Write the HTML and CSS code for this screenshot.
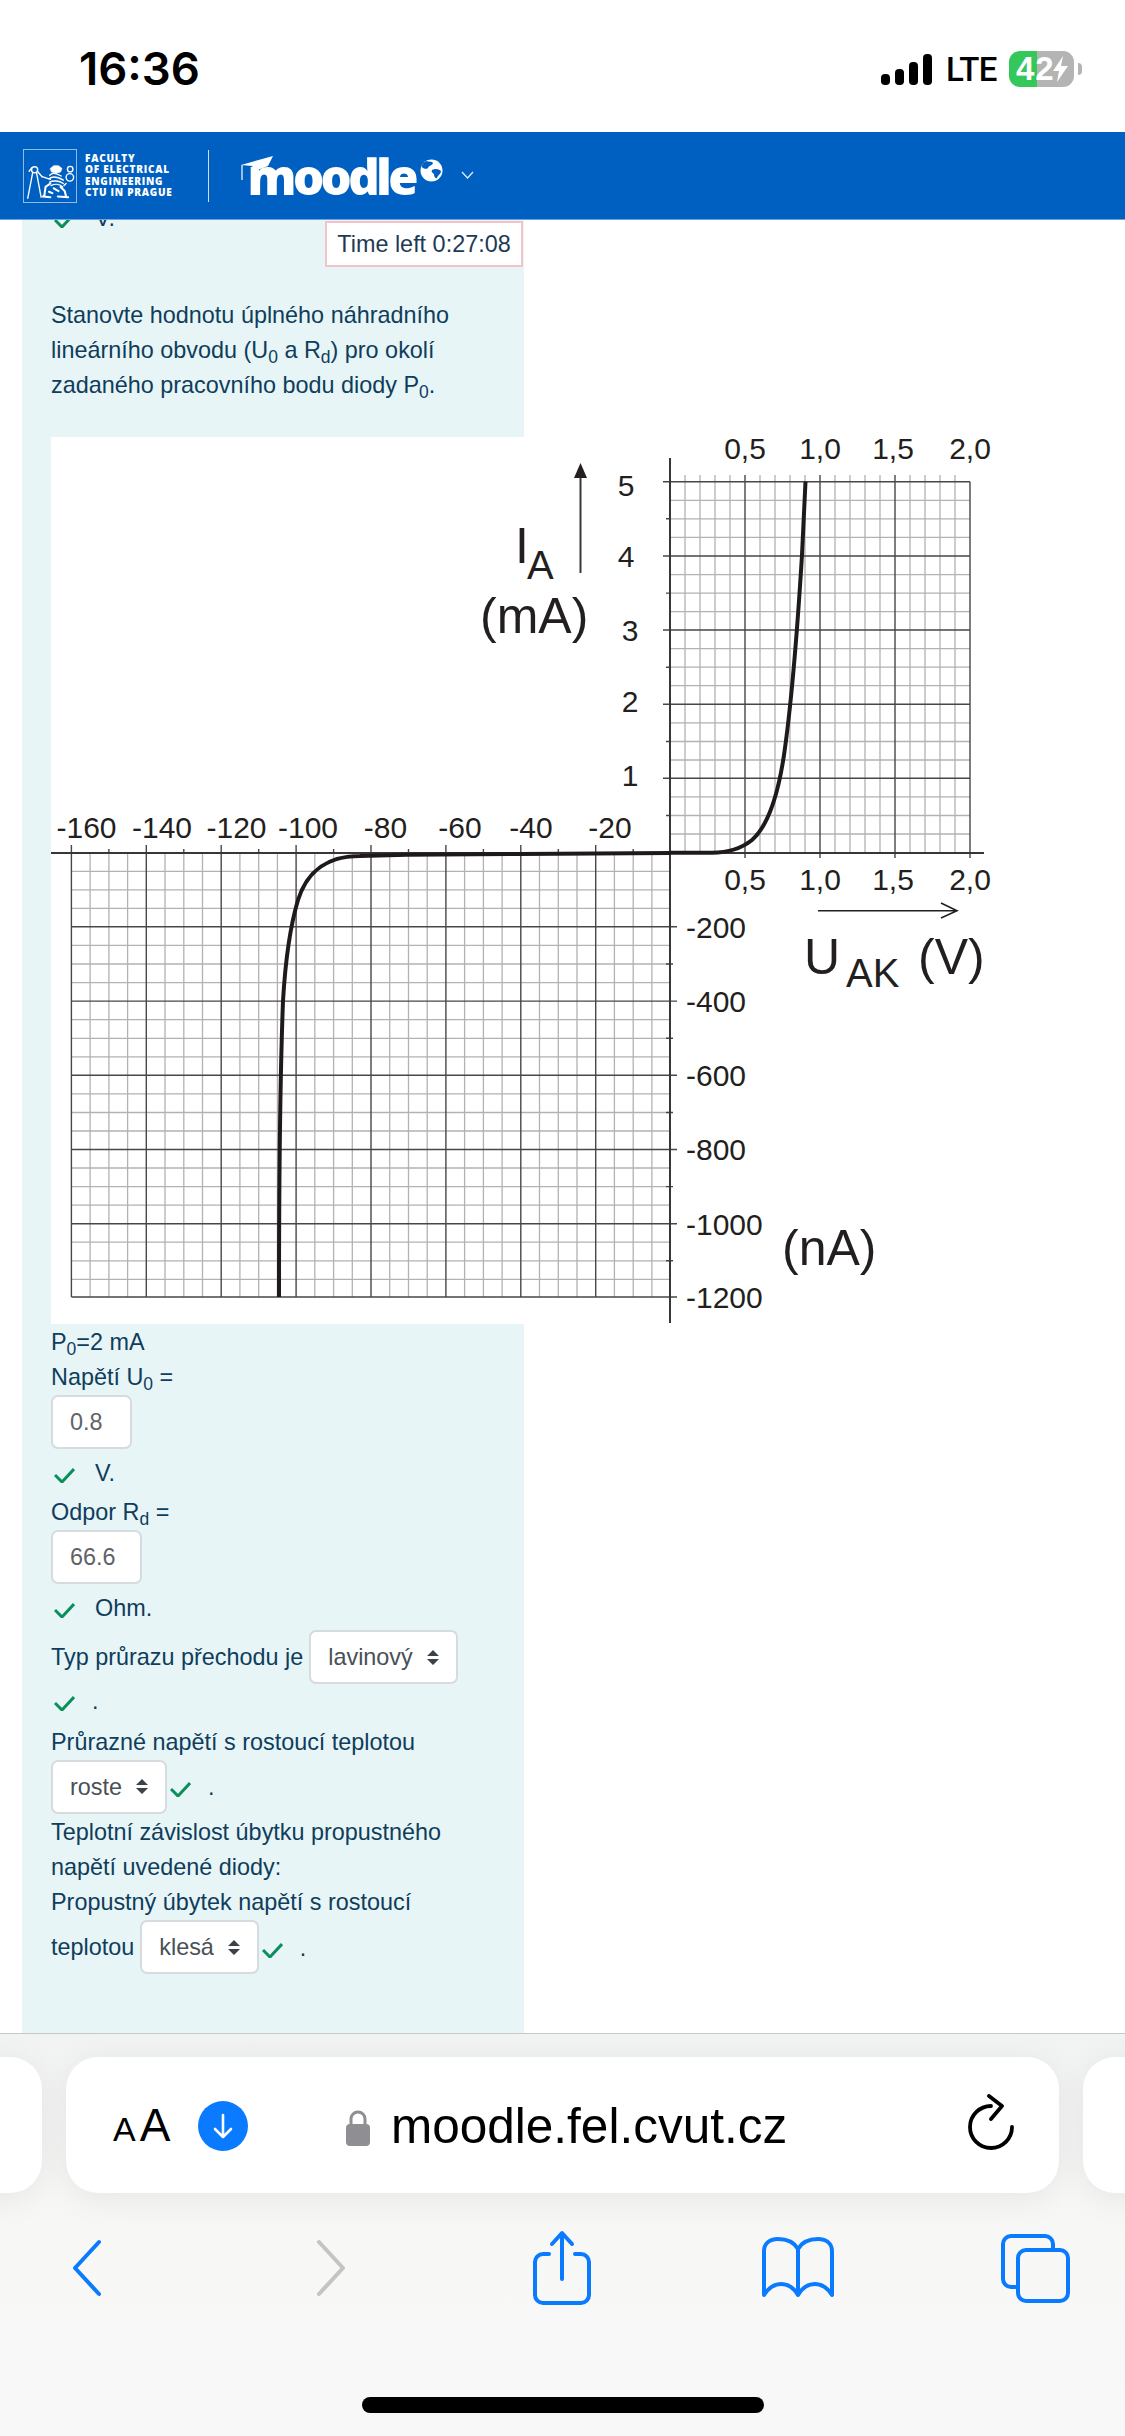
FILE: index.html
```html
<!DOCTYPE html>
<html lang="en">
<head>
    <meta charset="UTF-8">
    <title>moodle.fel.cvut.cz</title>
    <link rel="stylesheet" href="styles.css">
</head>
<body>
<div class="phone">
    <div class="status-bar">
        <span class="clock">16:36</span>
        <div class="status-icons">
            <div class="signal"><i class="b1"></i><i class="b2"></i><i class="b3"></i><i class="b4"></i></div>
            <span class="lte">LTE</span>
            <div class="battery">
                <div class="battery-body">
                    <span class="battery-4">4</span><span class="battery-2">2</span>
                    <svg class="bolt" width="15" height="26" viewBox="0 0 15 26"><path d="M10 0 L0 15 H6 L4 26 L15 10 H8 Z" fill="#fff"/></svg>
                </div>
                <div class="battery-nub"></div>
            </div>
        </div>
    </div>

    <header class="site-header">
        <div class="ctu-mark">
            <svg width="52" height="52" viewBox="13 15 152 150" fill="none" stroke="#fff" stroke-width="4" stroke-linecap="round">
                <!-- compass -->
                <circle cx="44" cy="72" r="9"/>
                <path d="M38 82 L24 155 M50 82 L63 152 M36 66 L28 76 M52 76 L66 92"/>
                <!-- lion -->
                <path d="M90 68 L100 60 L114 60 L124 68 L120 78 L106 82 L94 78 Z" fill="#fff" stroke-width="2"/>
                <path d="M66 92 L90 100 M88 88 C96 78 112 84 122 90 M86 98 C96 90 114 94 128 102 M88 108 C98 102 116 104 128 112 M92 118 C104 112 118 114 126 122"/>
                <path d="M90 112 L76 122 L72 150 M68 150 L90 152 M120 122 L132 134 L136 150 M112 150 L142 152 M100 126 L114 134 M86 136 L96 140" stroke-width="6"/>
                <!-- tail -->
                <circle cx="148" cy="70" r="8"/>
                <circle cx="147" cy="94" r="11"/>
                <path d="M136 112 L130 118"/>
            </svg>
        </div>
        <div class="ctu-name">
            <span>FACULTY</span>
            <span>OF ELECTRICAL</span>
            <span>ENGINEERING</span>
            <span>CTU IN PRAGUE</span>
        </div>
        <div class="header-divider"></div>
        <div class="moodle-logo">
            <svg class="moodle-hat" width="36" height="30" viewBox="0 0 36 30">
                <path d="M0 12 L32 3 L27 13 L14 18 L11 13 Z" fill="#fff"/>
                <path d="M1 12 V27" stroke="#fff" stroke-width="1.2"/>
            </svg>
            <span class="moodle-word">moodle</span>
            <svg class="moodle-globe" width="23" height="23" viewBox="0 0 23 23">
                <circle cx="11.5" cy="11.5" r="11" fill="#fff"/>
                <path d="M6 2 C9 3 12 2 13 4 C12 7 9 6 8 9 C6 11 3 9 1.5 8 C2 5 4 3 6 2 Z" fill="#0060c2"/>
                <path d="M12 11 C15 9 19 10 21 12 C21 15 18 16 17 19 C15 20 14 17 14 15 C12 14 11 12 12 11 Z" fill="#0060c2"/>
            </svg>
        </div>
        <svg class="header-chevron" width="13" height="8" viewBox="0 0 13 8"><path d="M1 1 L6.5 7 L12 1" fill="none" stroke="#dbe8f6" stroke-width="1.4"/></svg>
    </header>

    <main class="content">
        <div class="time-left">Time left 0:27:08</div>
        <section class="question">
            <div class="line first-line"><svg class="check" width="21" height="16" viewBox="0 0 21 16"><path d="M1 8 L8 15 L20 2"/></svg><span class="unit">V.</span></div>

            <p class="prompt">Stanovte hodnotu úplného náhradního<br>lineárního obvodu (U<sub>0</sub> a R<sub>d</sub>) pro okolí<br>zadaného pracovního bodu diody P<sub>0</sub>.</p>

            <svg class="chart" width="950" height="899" viewBox="51 425 950 899">
                <rect x="51" y="437" width="950" height="887" fill="#fff"/>
                <!-- minor grid -->
                <path class="grid-minor" d="M685 475V853M700 475V853M715 475V853M730 475V853M760 475V853M775 475V853M790 475V853M805 475V853M835 475V853M850 475V853M865 475V853M880 475V853M910 475V853M925 475V853M940 475V853M955 475V853
                    M670 500.3H970M670 518.8H970M670 537.4H970M670 574.6H970M670 593.1H970M670 611.7H970M670 648.6H970M670 667.2H970M670 685.7H970M670 722.9H970M670 741.5H970M670 760H970M670 796.9H970M670 815.5H970M670 834H970
                    M90.1 853V1297M108.9 853V1297M127.6 853V1297M165 853V1297M183.8 853V1297M202.5 853V1297M239.9 853V1297M258.7 853V1297M277.4 853V1297M314.8 853V1297M333.6 853V1297M352.3 853V1297M389.7 853V1297M408.5 853V1297M427.2 853V1297M464.6 853V1297M483.4 853V1297M502.1 853V1297M539.5 853V1297M558.3 853V1297M577 853V1297M614.4 853V1297M633.2 853V1297M651.9 853V1297
                    M71.4 871.4H670M71.4 889.9H670M71.4 908.4H670M71.4 945.4H670M71.4 964H670M71.4 982.6H670M71.4 1019.7H670M71.4 1038.3H670M71.4 1056.8H670M71.4 1093.9H670M71.4 1112.5H670M71.4 1131H670M71.4 1168H670M71.4 1186.6H670M71.4 1205.1H670M71.4 1242.2H670M71.4 1260.8H670M71.4 1279.3H670"/>
                <!-- major grid -->
                <path class="grid-major" d="M745 475V858M820 475V858M895 475V858M970 481.7V858
                    M663 481.7H970M663 556H970M663 630H970M663 704.3H970M663 778.3H970
                    M71.4 845V1297M146.3 845V1297M221.2 845V1297M296.1 845V1297M371 845V1297M445.9 845V1297M520.8 845V1297M595.7 845V1297
                    M71.4 926.8H677M71.4 1001.1H677M71.4 1075.3H677M71.4 1149.5H677M71.4 1223.7H677M71.4 1297H677"/>
                <!-- half ticks on the axes -->
                <path class="grid-major" d="M666 518.8H670M666 593.1H670M666 667.2H670M666 741.5H670M666 815.5H670
                    M666 964H673M666 1038.3H673M666 1112.5H673M666 1186.6H673M666 1260.8H673
                    M108.9 849V853M183.8 849V853M258.7 849V853M333.6 849V853M408.5 849V853M483.4 849V853M558.3 849V853M633.2 849V853"/>
                <path class="axis" d="M51 853H984M670 458V1323"/>

                <path class="curve" d="M670 852.7 H712 C730 852.7 742 848 752 840 C768 826 778 795 784 755 C792 700 798 620 802 555 L805.5 481.7"/>
                <path class="curve" d="M279 1297 C279 1180 280 1080 283 1001 C286 950 292 920 298 900 C305 878 320 856 360 856 L407 854.7 L520 854 L670 853"/>

                <path class="axis" d="M580.5 573V470"/>
                <path class="arrow-head" d="M574 478 L580.5 463 L587 478 Z"/>
                <path class="axis-thin" d="M818 910.7H956M941 903 L957 910.7 L941 918"/>

                <g class="tick-label">
                    <text x="745" y="459">0,5</text>
                    <text x="820" y="459">1,0</text>
                    <text x="893" y="459">1,5</text>
                    <text x="970" y="459">2,0</text>
                    <text x="745" y="890">0,5</text>
                    <text x="820" y="890">1,0</text>
                    <text x="893" y="890">1,5</text>
                    <text x="970" y="890">2,0</text>
                    <text x="626" y="496">5</text>
                    <text x="626" y="567">4</text>
                    <text x="630" y="641">3</text>
                    <text x="630" y="712">2</text>
                    <text x="630" y="786">1</text>
                    <text x="86.5" y="837.5">-160</text>
                    <text x="162" y="837.5">-140</text>
                    <text x="236.5" y="837.5">-120</text>
                    <text x="308" y="837.5">-100</text>
                    <text x="385.5" y="837.5">-80</text>
                    <text x="460" y="837.5">-60</text>
                    <text x="531" y="837.5">-40</text>
                    <text x="610" y="837.5">-20</text>
                </g>
                <g class="tick-label tick-left">
                    <text x="686" y="937.5">-200</text>
                    <text x="686" y="1011.5">-400</text>
                    <text x="686" y="1086">-600</text>
                    <text x="686" y="1160">-800</text>
                    <text x="686" y="1235">-1000</text>
                    <text x="686" y="1308">-1200</text>
                </g>
                <text class="axis-label" x="515" y="563">I</text>
                <text class="axis-sub" x="527" y="579">A</text>
                <text class="axis-label" x="480" y="633">(mA)</text>
                <text class="axis-label" x="804" y="974">U</text>
                <text class="axis-sub" x="846" y="987">AK</text>
                <text class="axis-label" x="918" y="974">(V)</text>
                <text class="axis-label" x="782" y="1265">(nA)</text>
            </svg>

            <div class="line after-chart">P<sub>0</sub>=2 mA</div>
            <div class="line">Napětí U<sub>0</sub> =</div>
            <div class="answer answer-u">0.8</div>
            <div class="line after-answer"><svg class="check" width="21" height="16" viewBox="0 0 21 16"><path d="M1 8 L8 15 L20 2"/></svg><span class="unit">V.</span></div>
            <div class="line gap-top">Odpor R<sub>d</sub> =</div>
            <div class="answer answer-r">66.6</div>
            <div class="line after-answer"><svg class="check" width="21" height="16" viewBox="0 0 21 16"><path d="M1 8 L8 15 L20 2"/></svg><span class="unit">Ohm.</span></div>

            <div class="select-row gap-top">
                <span>Typ průrazu přechodu je</span>
                <div class="select">
                    <span>lavinový</span>
                    <svg width="12" height="15" viewBox="0 0 12 15"><path d="M6 0 L12 6 H0 Z M0 9 H12 L6 15 Z"/></svg>
                </div>
            </div>
            <div class="line"><svg class="check" width="21" height="16" viewBox="0 0 21 16"><path d="M1 8 L8 15 L20 2"/></svg><span class="dot">.</span></div>
            <div class="line gap-top-wide">Průrazné napětí s rostoucí teplotou</div>
            <div class="select-row">
                <div class="select">
                    <span>roste</span>
                    <svg width="12" height="15" viewBox="0 0 12 15"><path d="M6 0 L12 6 H0 Z M0 9 H12 L6 15 Z"/></svg>
                </div>
                <span class="mark"><svg class="check" width="21" height="16" viewBox="0 0 21 16"><path d="M1 8 L8 15 L20 2"/></svg><span class="dot">.</span></span>
            </div>
            <div class="line after-select">Teplotní závislost úbytku propustného</div>
            <div class="line">napětí uvedené diody:</div>
            <div class="line">Propustný úbytek napětí s rostoucí</div>
            <div class="select-row">
                <span>teplotou</span>
                <div class="select">
                    <span>klesá</span>
                    <svg width="12" height="15" viewBox="0 0 12 15"><path d="M6 0 L12 6 H0 Z M0 9 H12 L6 15 Z"/></svg>
                </div>
                <span class="mark"><svg class="check" width="21" height="16" viewBox="0 0 21 16"><path d="M1 8 L8 15 L20 2"/></svg><span class="dot">.</span></span>
            </div>
        </section>
    </main>

    <footer class="toolbar">
        <div class="address-row">
            <div class="side-pill side-left"></div>
            <div class="address-pill">
                <span class="aa"><small>A</small>A</span>
                <span class="download">
                    <svg width="26" height="30" viewBox="0 0 26 30" fill="none" stroke="#fff" stroke-width="2.6" stroke-linecap="round" stroke-linejoin="round"><path d="M13 4 V26 M5 18 L13 26 L21 18"/></svg>
                </span>
                <svg class="lock" width="26" height="37" viewBox="0 0 26 37">
                    <path d="M6 17 V10 a7 7 0 0 1 14 0 V17" fill="none" stroke="#8e8e93" stroke-width="3"/>
                    <rect x="1" y="15" width="24" height="22" rx="4" fill="#8e8e93"/>
                </svg>
                <span class="url">moodle.fel.cvut.cz</span>
                <svg class="reload" width="48" height="58" viewBox="0 0 48 58" fill="none" stroke="#000" stroke-width="3.8" stroke-linecap="round" stroke-linejoin="round">
                    <path d="M24 12 A21 21 0 1 0 45 33"/>
                    <path d="M22 2 L35 12 L24 25"/>
                </svg>
            </div>
            <div class="side-pill side-right"></div>
        </div>
        <nav class="nav-row">
            <svg class="nav-back" width="30" height="58" viewBox="0 0 30 58"><path d="M27 3 L3 29 L27 55"/></svg>
            <svg class="nav-forward" width="30" height="58" viewBox="0 0 30 58"><path d="M3 3 L27 29 L3 55"/></svg>
            <svg class="nav-share" width="60" height="76" viewBox="0 0 60 76">
                <path d="M17 24 H11 a8 8 0 0 0 -8 8 V65 a8 8 0 0 0 8 8 H49 a8 8 0 0 0 8 -8 V32 a8 8 0 0 0 -8 -8 H43"/>
                <path d="M30 49 V4 M20 14 L30 3 L40 14"/>
            </svg>
            <svg class="nav-book" width="74" height="62" viewBox="0 0 74 62">
                <path d="M37 12 C33 5 26 2 17 2 C8 2 3 7 3 14 V58 C8 50 14 47 20 47 C27 47 33 51 37 58 C41 51 47 47 54 47 C60 47 66 50 71 58 V14 C71 7 66 2 57 2 C48 2 41 5 37 12 Z M37 12 V58"/>
            </svg>
            <svg class="nav-tabs" width="70" height="70" viewBox="0 0 70 70">
                <path d="M17 54 H11 a8 8 0 0 1 -8 -8 V11 a8 8 0 0 1 8 -8 H45 a8 8 0 0 1 8 8 V17"/>
                <rect x="18" y="17" width="50" height="51" rx="8"/>
            </svg>
        </nav>
        <div class="home-bar"></div>
    </footer>
</div>
</body>
</html>
```

FILE: styles.css
```css
* {
    box-sizing: border-box;
}

html, body {
    margin: 0;
    background: #fff;
}

.phone {
    width: 1125px;
    height: 2436px;
    display: flex;
    flex-direction: column;
    overflow: hidden;
    font-family: "Liberation Sans", Arial, sans-serif;
    color: #0f3d5b;
}

/* Status bar */
.status-bar {
    height: 132px;
    flex: none;
    display: flex;
    justify-content: space-between;
    padding: 45px 43px 0 79px;
}

.clock {
    font-family: Inter, sans-serif;
    font-weight: 600;
    font-size: 45.5px;
    line-height: 48px;
    color: #000;
}

.status-icons {
    display: flex;
    align-items: flex-start;
}

.signal {
    display: flex;
    align-items: flex-end;
    gap: 5.5px;
    height: 32px;
    margin: 8px 14px 0 0;
}

.signal i {
    display: block;
    width: 8.5px;
    background: #000;
    border-radius: 4px;
}

.signal .b1 { height: 11px; }
.signal .b2 { height: 16px; }
.signal .b3 { height: 23px; }
.signal .b4 { height: 31px; }

.lte {
    font-family: Roboto, sans-serif;
    font-weight: 500;
    font-size: 33px;
    line-height: 36px;
    letter-spacing: -0.5px;
    margin: 7px 12px 0 0;
    color: #000;
}

.battery {
    display: flex;
    align-items: center;
    margin-top: 6px;
}

.battery-body {
    width: 65px;
    height: 36px;
    border-radius: 11px;
    background: linear-gradient(to right, #34c759 0, #34c759 28px, #b4b4b4 28px);
    display: flex;
    align-items: center;
    padding-left: 7px;
    color: #fff;
    font-weight: bold;
    font-size: 33px;
}

.battery-2 {
    margin-left: 1px;
}

.bolt {
    margin-left: -1px;
}

.battery-nub {
    width: 4px;
    height: 12px;
    margin-left: 4px;
    background: #b4b4b4;
    border-radius: 0 6px 6px 0;
}

/* Site header */
.site-header {
    height: 88px;
    flex: none;
    display: flex;
    align-items: center;
    padding-left: 23px;
    background: #0060c2;
    border-bottom: 1.5px solid #6ca3dd;
}

.ctu-mark {
    width: 54px;
    height: 54px;
    border: 1px solid #8fbbe8;
    display: flex;
    align-items: center;
    justify-content: center;
}

.ctu-name {
    display: flex;
    flex-direction: column;
    margin-left: 8px;
    font-family: "Open Sans", sans-serif;
    font-weight: 800;
    font-size: 10px;
    line-height: 11.1px;
    letter-spacing: 0.75px;
    color: #fff;
}

.header-divider {
    width: 1px;
    height: 52px;
    margin-left: 35px;
    background: #cfe0f3;
}

.moodle-logo {
    position: relative;
    display: flex;
    align-items: center;
    margin-left: 39px;
    height: 60px;
}

.moodle-word {
    font-family: "Open Sans", sans-serif;
    font-weight: 800;
    font-size: 49px;
    line-height: 60px;
    letter-spacing: -3.6px;
    color: #fff;
}

.moodle-hat {
    position: absolute;
    left: -7px;
    top: 7px;
}

.moodle-globe {
    margin: -10px 0 0 5px;
}

.header-chevron {
    margin: 0 0 2px 18px;
}

/* Scrolled page content */
.content {
    position: relative;
    flex: 1;
    overflow: hidden;
}

.time-left {
    position: absolute;
    left: 325px;
    top: 1px;
    width: 198px;
    height: 46px;
    background: #fff;
    border: 2px solid #f5c2c9;
    color: #1d3a55;
    font-size: 23.4px;
    line-height: 42px;
    text-align: center;
}

.question {
    width: 502px;
    margin: -19.3px 0 0 22px;
    padding: 0 0 200px 29px;
    background: #e7f5f7;
    font-size: 23.4px;
    line-height: 35px;
}

.line {
    height: 35px;
    white-space: nowrap;
}

.first-line {
    margin-bottom: 61.8px;
}

.prompt {
    margin: 0 0 22.5px;
    white-space: nowrap;
}

sub {
    font-size: 17.5px;
    line-height: 0;
    vertical-align: -5px;
}

.check {
    margin-left: 3px;
    vertical-align: -2px;
    fill: none;
    stroke: #0a8f5b;
    stroke-width: 3;
}

.unit {
    margin-left: 20px;
}

.dot {
    margin-left: 17px;
}

.answer, .select {
    height: 54px;
    background: #fff;
    border: 2px solid #d6dbe0;
    border-radius: 7px;
    line-height: 50px;
}

.answer {
    padding-left: 17px;
    color: #5f6368;
}

.answer-u {
    width: 81px;
}

.answer-r {
    width: 91px;
}

.after-chart {
    margin-top: 1.4px;
}

.after-answer {
    margin-top: 7px;
}

.after-select {
    margin-top: 1.7px;
}

.gap-top {
    margin-top: 4px;
}

.gap-top-wide {
    margin-top: 5.3px;
}

.select-row {
    display: flex;
    align-items: center;
    gap: 6px;
    height: 54px;
    white-space: nowrap;
}

.select {
    display: flex;
    align-items: center;
    gap: 14px;
    padding: 0 17px;
    color: #495057;
}

.select svg {
    fill: #3c4247;
}

.mark {
    margin-left: -6px;
    padding-top: 2px;
}

/* Chart */
.chart {
    display: block;
}

.grid-minor {
    fill: none;
    stroke: #b2b2b2;
    stroke-width: 1.3;
}

.grid-major {
    fill: none;
    stroke: #4a4646;
    stroke-width: 1.4;
}

.axis {
    fill: none;
    stroke: #3a3636;
    stroke-width: 2;
}

.axis-thin {
    fill: none;
    stroke: #231f20;
    stroke-width: 1.6;
}

.arrow-head {
    fill: #231f20;
}

.curve {
    fill: none;
    stroke: #1f1a1a;
    stroke-width: 4;
    stroke-linejoin: round;
}

.tick-label text {
    font-size: 30px;
    fill: #231f20;
    text-anchor: middle;
}

.tick-left text {
    text-anchor: start;
}

.axis-label {
    font-size: 50px;
    fill: #231f20;
}

.axis-sub {
    font-size: 40px;
    fill: #231f20;
}

/* Safari toolbar */
.toolbar {
    height: 403px;
    flex: none;
    border-top: 1.5px solid #c6c8c8;
    background: linear-gradient(to bottom, #f1f2f2, #f7f7f6 40%, #f8f8f8);
}

.address-row {
    display: flex;
    gap: 24px;
    height: 136px;
    margin: 23px 0 0 -58px;
}

.side-pill, .address-pill {
    height: 136px;
    flex: none;
    background: #fff;
    border-radius: 32px;
    box-shadow: 0 6px 34px rgba(0, 0, 0, 0.07);
}

.side-pill {
    width: 100px;
}

.address-pill {
    width: 993px;
    display: flex;
    align-items: center;
    padding: 0 44px 0 47px;
    color: #000;
}

.aa {
    font-size: 46px;
    line-height: 50px;
    width: 58px;
    margin-top: 4px;
}

.aa small {
    font-size: 34px;
    margin-right: 4px;
}

.download {
    width: 50px;
    height: 50px;
    margin: 1px 0 0 27px;
    border-radius: 50%;
    background: #0a7aff;
    display: flex;
    align-items: center;
    justify-content: center;
}

.lock {
    margin: 4px 0 0 97px;
}

.url {
    margin: 2px 0 0 20px;
    font-size: 49.5px;
    line-height: 56px;
}

.reload {
    margin: 0 0 4px auto;
}

.nav-row {
    display: flex;
    align-items: center;
    height: 76px;
    margin-top: 37px;
    padding-left: 72px;
}

.nav-row svg {
    flex: none;
    fill: none;
    stroke: #0a7aff;
    stroke-width: 4;
    stroke-linecap: round;
    stroke-linejoin: round;
}

.nav-forward {
    margin-left: 214px;
}

.nav-row .nav-forward {
    stroke: #c4c4c0;
}

.nav-share {
    margin-left: 186px;
}

.nav-book {
    margin-left: 169px;
}

.nav-tabs {
    margin-left: 165px;
}

.home-bar {
    width: 402px;
    height: 15.5px;
    margin: 91px 0 0 362px;
    background: #000;
    border-radius: 8px;
}
```
